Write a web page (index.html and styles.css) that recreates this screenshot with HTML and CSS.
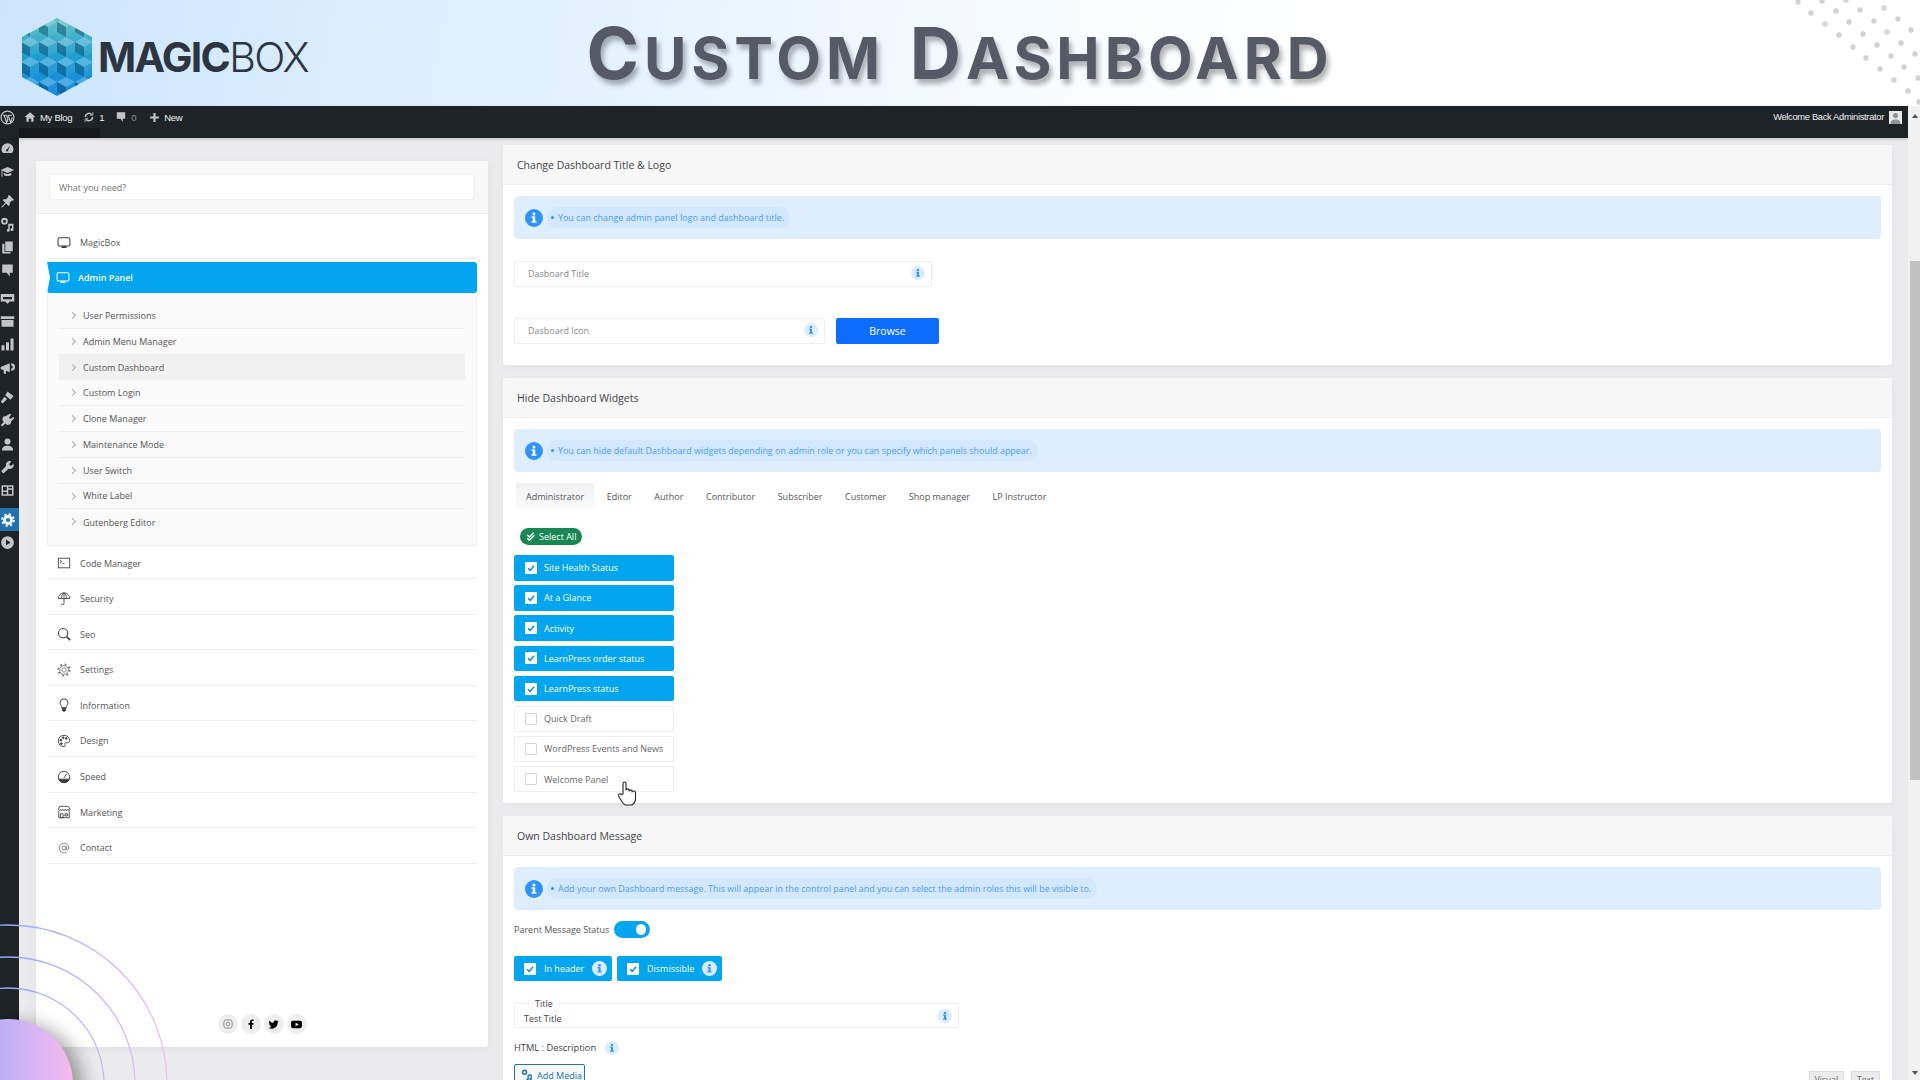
FILE: index.html
```html
<!DOCTYPE html>
<html lang="en">
<head>
    <meta charset="UTF-8">
    <title>Custom Dashboard</title>
    <link rel="stylesheet" href="styles.css">
</head>
<body>

<svg class="defs" width="0" height="0">
    <defs>
        <symbol id="info" viewBox="0 0 20 20"><rect x="8.6" y="8.4" width="2.8" height="6.4"/><rect x="7.2" y="13.6" width="5.6" height="1.6"/><rect x="7.2" y="8.2" width="3" height="1.5"/><circle cx="10" cy="5.6" r="1.7"/></symbol>
        <symbol id="check" viewBox="0 0 12 12"><path d="M3 6.2l2.2 2.2L9 3.8" fill="none" stroke="#0a8fd0" stroke-width="1.5"/></symbol>
        <symbol id="monitor" viewBox="0 0 16 16"><rect x="1.2" y="2" width="13.6" height="9.4" rx="1.6" fill="none" stroke="currentColor" stroke-width="1.2"/><path d="M5.5 11.4h5l.6 2.4H4.9z" fill="currentColor"/></symbol>
    </defs>
</svg>

<header class="banner">
    <div class="logo">
        <svg class="logo-mark" width="74" height="80" viewBox="0 0 74 80">
            <defs>
                <linearGradient id="hexFill" x1="0" y1="0" x2="0" y2="1">
                    <stop offset="0" stop-color="#5fc0c4"/>
                    <stop offset="0.5" stop-color="#1f9dd0"/>
                    <stop offset="1" stop-color="#0f86e0"/>
                </linearGradient>
                <pattern id="cubes" width="18" height="20" patternUnits="userSpaceOnUse" x="1" y="0">
                    <path d="M9 0L18 5 9 10 0 5z" fill="#fff" opacity="0.25"/>
                    <path d="M0 5L9 10V20L0 15z" fill="#00324f" opacity="0.38"/>
                    <path d="M18 5L9 10V20L18 15z" fill="#fff" opacity="0.05"/>
                </pattern>
            </defs>
            <path d="M37 1L72 20V60L37 79 2 60V20z" fill="url(#hexFill)"/>
            <path d="M37 1L72 20V60L37 79 2 60V20z" fill="url(#cubes)"/>
        </svg>
        <span class="logo-text"><b>MAGIC</b>BOX</span>
    </div>
    <h1 class="page-title"><span class="word">Custom</span> <span class="word">Dashboard</span></h1>
    <svg class="dots" width="220" height="106" viewBox="0 0 220 106" fill="#d2d2d2">
        <circle cx="98" cy="2" r="2.7"/><circle cx="122" cy="1" r="2.7"/><circle cx="146" cy="0" r="2.7"/>
        <circle cx="111" cy="13" r="2.7"/><circle cx="136" cy="11" r="2.7"/><circle cx="160" cy="10" r="2.7"/><circle cx="184" cy="8" r="2.7"/>
        <circle cx="125" cy="24" r="2.7"/><circle cx="149" cy="22" r="2.7"/><circle cx="174" cy="21" r="2.7"/><circle cx="198" cy="19" r="2.7"/>
        <circle cx="139" cy="35" r="2.7"/><circle cx="163" cy="34" r="2.7"/><circle cx="187" cy="32" r="2.7"/><circle cx="211" cy="30" r="2.7"/>
        <circle cx="153" cy="47" r="2.7"/><circle cx="177" cy="45" r="2.7"/><circle cx="201" cy="43" r="2.7"/>
        <circle cx="166" cy="58" r="2.7"/><circle cx="191" cy="56" r="2.7"/><circle cx="215" cy="54" r="2.7"/>
        <circle cx="180" cy="69" r="2.7"/><circle cx="204" cy="67" r="2.7"/>
        <circle cx="194" cy="80" r="2.7"/><circle cx="218" cy="78" r="2.7"/>
        <circle cx="208" cy="91" r="2.7"/><circle cx="219" cy="102" r="2.7"/>
    </svg>
</header>

<div class="app">
    <div class="shell">
        <div class="adminbar">
            <div class="bar-group">
                <svg class="bar-wp" width="15" height="15" viewBox="0 0 20 20"><circle cx="10" cy="10" r="8.6" fill="none" stroke="#c3c4c7" stroke-width="1.6"/><path d="M4 7h5M11 7h5M5.5 7l3.4 10 1.6-5-1.6-5M11 7l3.2 10 2.2-7" fill="none" stroke="#c3c4c7" stroke-width="1.5"/></svg>
                <span class="bar-item bar-site">
                    <svg width="12" height="12" viewBox="0 0 20 20" fill="#c3c4c7"><path d="M10 2L1 10h3v8h4v-5h4v5h4v-8h3z"/></svg>
                    My Blog
                </span>
                <span class="bar-item bar-updates">
                    <svg width="12" height="12" viewBox="0 0 20 20" fill="none" stroke="#c3c4c7" stroke-width="2.4"><path d="M4 10a6 6 0 0 1 10.5-4M16 10a6 6 0 0 1-10.5 4"/><path d="M16.5 2v5h-5M3.5 18v-5h5" stroke-width="1.4"/></svg>
                    1
                </span>
                <span class="bar-item bar-comments">
                    <svg width="12" height="12" viewBox="0 0 20 20" fill="#c3c4c7"><path d="M3 2h14v11h-4v5l-4-5H3z"/></svg>
                    <span class="muted">0</span>
                </span>
                <span class="bar-item bar-new">
                    <svg width="11" height="11" viewBox="0 0 20 20" fill="#c3c4c7"><path d="M8 2h4v6h6v4h-6v6H8v-6H2V8h6z"/></svg>
                    New
                </span>
            </div>
            <div class="bar-group">
                <span class="bar-item bar-welcome">Welcome Back Administrator</span>
                <span class="avatar"><svg width="13" height="13" viewBox="0 0 13 13" fill="#8f9396"><circle cx="6.5" cy="4.6" r="2.6"/><path d="M1.5 13c0-3.5 2-4.6 5-4.6s5 1.100 5 4.600z"/></svg></span>
            </div>
            <div class="bar-flyout"></div>
        </div>

        <div class="wpbody">
            <aside class="sidebar">
                <svg viewBox="0 0 20 20"><path d="M10 3a8 8 0 0 0-8 8c0 2 .7 3.800 2 5h12a8 8 0 0 0 2-5 8 8 0 0 0-8-8zm3.500 3l-2.500 6a1.500 1.500 0 1 1-1.500-1z" fill-rule="evenodd"/></svg>
                <svg viewBox="0 0 20 20"><path d="M1 8l9-4 9 4-9 4zM5 11.500v3c2 2 8 2 10 0v-3l-5 2zM2 9h1.200v8H2z"/></svg>
                <svg class="gap" viewBox="0 0 20 20"><path d="M12 1l7 7-2 1-1-.5-3 3v3L11.500 16 8 12.500 3 18H2v-1l5-5.500L3.500 8 5 7h3l3-3-.5-1z"/></svg>
                <svg viewBox="0 0 20 20"><path d="M6 1a4.500 4.500 0 1 1 0 9 4.500 4.500 0 0 1 0-9zm0 2.500a2 2 0 1 0 0 4 2 2 0 0 0 0-4zM11 9h7v7.500a2 2 0 1 1-2-2V11.500h-3v6a2 2 0 1 1-2-2z"/></svg>
                <svg viewBox="0 0 20 20"><path d="M7 2h10v13H7zM3 5h3v11h8v2H3z"/></svg>
                <svg viewBox="0 0 20 20"><path d="M3 2h14v11h-4v5l-4-5H3z"/></svg>
                <svg class="gap-small" viewBox="0 0 20 20"><path d="M2 4h16a1 1 0 0 1 1 1v9h-6l-3 3-3-3H1V5a1 1 0 0 1 1-1zm2 4v3h12V8z" fill-rule="evenodd"/></svg>
                <svg viewBox="0 0 20 20"><path d="M1 3h18v3.500H1zM2 8h16v9H2z"/></svg>
                <svg viewBox="0 0 20 20"><path d="M2 11h4v7H2zM8 7h4v11H8zM14 2h4v16h-4z"/></svg>
                <svg viewBox="0 0 20 20"><path d="M1 8l12-5v12l-5-2v4H5v-5l-4-1zM15 3a5 5 0 0 1 0 10V10a2 2 0 0 0 0-4z"/></svg>
                <svg class="gap" viewBox="0 0 20 20"><path d="M10 2l8 6-4 5-7-6zM6 9l3.500 3-6 6L1 15.500z"/></svg>
                <svg viewBox="0 0 20 20"><path d="M13 1l2 1-3 4 2 2 4-3 1 2-4 4-1 4-4 1-3-2-4 4-2-2 4-4-2-3 1-4 4-1z"/></svg>
                <svg viewBox="0 0 20 20"><circle cx="10" cy="6" r="4"/><path d="M2.500 18c0-5 3.500-6.500 7.500-6.500s7.500 1.500 7.500 6.500z"/></svg>
                <svg viewBox="0 0 20 20"><path d="M18 5l-3.500 3L12 5.500 15 2a5 5 0 0 0-7 6l-6.500 7 3 3 7-6.500a5 5 0 0 0 6.500-6.500z"/></svg>
                <svg viewBox="0 0 20 20"><path d="M2 3h16v14H2zm2 2v5h5V5zm7 0v2h5V5zm0 4v6h5V9zm-7 3v3h5v-3z" fill-rule="evenodd"/></svg>
                <span class="side-active"><svg viewBox="0 0 20 20" fill="none" stroke="#fff"><circle cx="10" cy="10" r="5" stroke-width="4"/><circle cx="10" cy="10" r="8.200" stroke-width="3" stroke-dasharray="3.200 3.240"/></svg></span>
                <svg viewBox="0 0 20 20"><path d="M10 1.500a8.500 8.500 0 1 1 0 17 8.500 8.500 0 0 1 0-17zM8 6v8l6-4z" fill-rule="evenodd"/></svg>
            </aside>

            <main class="content">
                <section class="left-panel">
                    <div class="left-head">
                        <div class="search">What you need?</div>
                    </div>
                    <nav class="menu">
                        <a class="menu-row first"><svg class="menu-icon"><use href="#monitor"/></svg>MagicBox</a>
                        <a class="menu-active"><svg class="menu-icon"><use href="#monitor"/></svg>Admin Panel</a>
                        <div class="submenu">
                            <a class="sub-row">User Permissions</a>
                            <a class="sub-row">Admin Menu Manager</a>
                            <a class="sub-row current">Custom Dashboard</a>
                            <a class="sub-row">Custom Login</a>
                            <a class="sub-row">Clone Manager</a>
                            <a class="sub-row">Maintenance Mode</a>
                            <a class="sub-row">User Switch</a>
                            <a class="sub-row">White Label</a>
                            <a class="sub-row">Gutenberg Editor</a>
                        </div>
                        <a class="menu-row after-sub">
                            <svg class="menu-icon" viewBox="0 0 16 16" fill="none" stroke="currentColor"><rect x="1.500" y="2.500" width="13" height="11"/><path d="M3.500 5l2 1.500-2 1.500M6.500 8.500h2"/></svg>Code Manager</a>
                        <a class="menu-row">
                            <svg class="menu-icon" viewBox="0 0 16 16" fill="none" stroke="currentColor"><path d="M1.500 7.500a6.500 6.500 0 0 1 13 0zM8 1v6.500M5 7.500C5 4 6.500 2 8 1c1.500 1 3 3 3 6.500M8 7.500V13a1.500 1.500 0 0 1-3 0"/></svg>Security</a>
                        <a class="menu-row">
                            <svg class="menu-icon" viewBox="0 0 16 16" fill="none" stroke="currentColor" stroke-width="1.200"><circle cx="7" cy="7" r="5.300"/><path d="M11 11l4 4" stroke-width="1.800"/></svg>Seo</a>
                        <a class="menu-row">
                            <svg class="menu-icon" viewBox="0 0 16 16" fill="none" stroke="#777"><circle cx="8" cy="8" r="2.500"/><circle cx="8" cy="8" r="5"/><circle cx="8" cy="8" r="6.500" stroke-width="2" stroke-dasharray="2 3.100"/></svg>Settings</a>
                        <a class="menu-row">
                            <svg class="menu-icon" viewBox="0 0 16 16" fill="none" stroke="currentColor" stroke-width="1.100"><path d="M5.500 11c0-2-2-3-2-5.500a4.500 4.500 0 0 1 9 0c0 2.500-2 3.500-2 5.500z"/><path d="M6 12h4v2l-1 1H7l-1-1z" fill="currentColor"/></svg>Information</a>
                        <a class="menu-row">
                            <svg class="menu-icon" viewBox="0 0 16 16" fill="none" stroke="currentColor"><path d="M8 1.500a6.500 6.500 0 1 0 0 13c1.500 0 1.500-1.500 1-2.500s0-2 1.500-2h2c1 0 2-1 2-2.500 0-3.500-3-6-6.500-6z"/><circle cx="4.500" cy="7" r="1" fill="currentColor"/><circle cx="7" cy="4.200" r="1" fill="currentColor"/><circle cx="10.500" cy="5" r="1" fill="currentColor"/><circle cx="5" cy="11" r="1" fill="currentColor"/></svg>Design</a>
                        <a class="menu-row">
                            <svg class="menu-icon" viewBox="0 0 16 16" fill="none" stroke="currentColor"><circle cx="8" cy="8" r="6.500"/><path d="M2 10.500h12A6.500 6.500 0 0 1 2 10.500z" fill="currentColor"/><path d="M8 9l3-4.500"/></svg>Speed</a>
                        <a class="menu-row">
                            <svg class="menu-icon" viewBox="0 0 16 16" fill="none" stroke="currentColor"><path d="M3 1.500h10l2 3.500c0 1.500-2.500 1.500-2.500 0 0 1.500-3 1.500-3 0 0 1.500-3 1.500-3 0 0 1.500-2.500 1.500-2.500 0 0 1.500-2.500 1.500-2.500 0z"/><path d="M2 7v7.500h12V7M4 10h3v4.500H4zM9 10h3v2.500H9z"/></svg>Marketing</a>
                        <a class="menu-row">
                            <svg class="menu-icon" viewBox="0 0 16 16" fill="none" stroke="#777"><circle cx="8" cy="8" r="2.400"/><path d="M10.400 5.600v3.400c0 2 3.100 1.500 3.100-1A5.500 5.500 0 1 0 11 12.700"/></svg>Contact</a>
                    </nav>
                    <div class="socials">
                        <span class="social"><svg width="10" height="10" viewBox="0 0 12 12" fill="none" stroke="#777"><rect x="1" y="1" width="10" height="10" rx="3"/><circle cx="6" cy="6" r="2.300"/></svg></span>
                        <span class="social"><svg width="10" height="10" viewBox="0 0 12 12"><path d="M7 12V6.800h1.700L9 4.700H7V3.500c0-.6.2-1 1-1h1.100V.6C8.800.5 8.200.5 7.600.5 6 .5 4.900 1.400 4.900 3.200v1.500H3v2.100h1.900V12z"/></svg></span>
                        <span class="social"><svg width="11" height="11" viewBox="0 0 12 12"><path d="M11.500 2.500c-.4.200-.8.300-1.300.4.500-.3.800-.7 1-1.300-.4.300-.9.500-1.400.6a2.300 2.300 0 0 0-3.900 2C4 4.100 2.400 3.200 1.300 1.900c-.6 1-.3 2.400.7 3-.4 0-.7-.1-1-.3 0 1.100.8 2.100 1.800 2.300-.3.100-.7.100-1 0 .3.900 1.100 1.600 2.100 1.600A4.600 4.600 0 0 1 .5 9.500 6.500 6.500 0 0 0 10.500 3.800c.4-.3.700-.8 1-1.300z"/></svg></span>
                        <span class="social"><svg width="11" height="11" viewBox="0 0 12 12"><path d="M2 2h8a2 2 0 0 1 2 2v4a2 2 0 0 1-2 2H2a2 2 0 0 1-2-2V4a2 2 0 0 1 2-2zm3 2v4l3.500-2z" fill-rule="evenodd"/></svg></span>
                    </div>
                </section>

                <div class="right-col">
                    <section class="panel panel-logo">
                        <h2 class="panel-head">Change Dashboard Title &amp; Logo</h2>
                        <div class="panel-body">
                            <div class="notice">
                                <svg class="notice-icon"><use href="#info"/></svg>
                                <span class="notice-pill"><i></i>You can change admin panel logo and dashboard title.</span>
                            </div>
                            <div class="field field-title">Dasboard Title<svg class="badge"><use href="#info"/></svg></div>
                            <div class="icon-row">
                                <div class="field field-icon">Dasboard Icon<svg class="badge"><use href="#info"/></svg></div>
                                <button class="browse">Browse</button>
                            </div>
                        </div>
                    </section>

                    <section class="panel panel-widgets">
                        <h2 class="panel-head">Hide Dashboard Widgets</h2>
                        <div class="panel-body">
                            <div class="notice">
                                <svg class="notice-icon"><use href="#info"/></svg>
                                <span class="notice-pill"><i></i>You can hide default Dashboard widgets depending on admin role or you can specify which panels should appear.</span>
                            </div>
                            <div class="tabs">
                                <span class="tab active">Administrator</span>
                                <span class="tab">Editor</span>
                                <span class="tab">Author</span>
                                <span class="tab">Contributor</span>
                                <span class="tab">Subscriber</span>
                                <span class="tab">Customer</span>
                                <span class="tab">Shop manager</span>
                                <span class="tab">LP Instructor</span>
                            </div>
                            <span class="select-all">
                                <svg width="10" height="10" viewBox="0 0 12 12" fill="none" stroke="#fff" stroke-width="1.600"><path d="M1.500 3.500L4 6l5-5M1.500 7.500L4 10l6-6"/></svg>
                                Select All
                            </span>
                            <div class="widget-list">
                                <label class="widget on"><span class="box"><svg><use href="#check"/></svg></span>Site Health Status</label>
                                <label class="widget on"><span class="box"><svg><use href="#check"/></svg></span>At a Glance</label>
                                <label class="widget on"><span class="box"><svg><use href="#check"/></svg></span>Activity</label>
                                <label class="widget on"><span class="box"><svg><use href="#check"/></svg></span>LearnPress order status</label>
                                <label class="widget on"><span class="box"><svg><use href="#check"/></svg></span>LearnPress status</label>
                                <label class="widget"><span class="box"></span>Quick Draft</label>
                                <label class="widget"><span class="box"></span>WordPress Events and News</label>
                                <label class="widget"><span class="box"></span>Welcome Panel</label>
                            </div>
                        </div>
                    </section>

                    <section class="panel panel-message">
                        <h2 class="panel-head">Own Dashboard Message</h2>
                        <div class="panel-body">
                            <div class="notice">
                                <svg class="notice-icon"><use href="#info"/></svg>
                                <span class="notice-pill"><i></i>Add your own Dashboard message. This will appear in the control panel and you can select the admin roles this will be visible to.</span>
                            </div>
                            <div class="status-row">Parent Message Status<span class="toggle"></span></div>
                            <div class="option-row">
                                <label class="option opt-header"><span class="box"><svg><use href="#check"/></svg></span>In header<svg class="opt-badge"><use href="#info"/></svg></label>
                                <label class="option opt-dismiss"><span class="box"><svg><use href="#check"/></svg></span>Dismissible<svg class="opt-badge"><use href="#info"/></svg></label>
                            </div>
                            <div class="field field-legend"><span class="legend">Title</span>Test Title<svg class="badge"><use href="#info"/></svg></div>
                            <div class="html-label">HTML : Description<svg class="badge"><use href="#info"/></svg></div>
                            <div class="editor-bar">
                                <button class="add-media"><svg width="12" height="12" viewBox="0 0 20 20" fill="#2271b1"><path d="M6 1a4.500 4.500 0 1 1 0 9 4.500 4.500 0 0 1 0-9zm0 2.500a2 2 0 1 0 0 4 2 2 0 0 0 0-4zM11 9h7v7.500a2 2 0 1 1-2-2V11.500h-3v6a2 2 0 1 1-2-2z" fill-rule="evenodd"/></svg>Add Media</button>
                                <div class="editor-tabs">
                                    <span class="editor-tab">Visual</span>
                                    <span class="editor-tab">Text</span>
                                </div>
                            </div>
                        </div>
                    </section>
                </div>
            </main>
        </div>
    </div>

    <div class="scrollbar">
        <span class="arrow up"></span>
        <span class="thumb"></span>
        <span class="arrow down"></span>
    </div>
</div>

<svg class="rings" width="180" height="165" viewBox="0 0 180 165">
    <defs>
        <linearGradient id="ringLine" gradientUnits="userSpaceOnUse" x1="0" y1="0" x2="170" y2="0">
            <stop offset="0" stop-color="#8ea8ff"/>
            <stop offset="1" stop-color="#f8bdf0"/>
        </linearGradient>
        <linearGradient id="ringFill" x1="0" y1="0" x2="1" y2="0">
            <stop offset="0" stop-color="#90a8ff"/>
            <stop offset="1" stop-color="#f6b9ee"/>
        </linearGradient>
        <filter id="soft" x="-50%" y="-50%" width="200%" height="200%"><feGaussianBlur stdDeviation="9"/></filter>
    </defs>
    <g fill="none" stroke="url(#ringLine)" stroke-width="1.300">
        <circle cx="8" cy="169" r="159"/>
        <circle cx="8" cy="169" r="127"/>
        <circle cx="8" cy="169" r="96"/>
    </g>
    <circle cx="18" cy="174" r="66" fill="#000" opacity="0.35" filter="url(#soft)"/>
    <circle cx="8" cy="169" r="65" fill="url(#ringFill)"/>
</svg>

<svg class="hand" width="20" height="26" viewBox="0 0 20 26" fill="#fff" stroke="#222" stroke-width="1.100" stroke-linejoin="round">
    <path d="M6 14V3.500a1.500 1.500 0 0 1 3 0V10c0-1.500 3-1.500 3 0v1c0-1.500 3-1.500 3 0v1c0-1.500 3.500-1.500 3.500.5V18c0 3-1.500 6-4 7H9c-2 0-3-1.500-4.500-4L1.500 16c-.8-1.500 1.500-3 3-1.500z"/>
</svg>

</body>
</html>
```
FILE: styles.css
```css
* {
    box-sizing: border-box;
}

body {
    margin: 0;
    width: 1920px;
    height: 1080px;
    overflow: hidden;
    position: relative;
    display: flex;
    flex-direction: column;
    font-family: "Open Sans", sans-serif;
    font-size: 9px;
    color: #555;
    background-color: #ebebee;
}

.defs {
    position: absolute;
}

/* banner */
.banner {
    height: 106px;
    flex: none;
    position: relative;
    display: grid;
    grid-template-columns: 1fr auto 1fr;
    align-items: center;
    background: linear-gradient(100deg, #cde5fd 0%, #e4f2ff 30%, #fafdff 58%, #ffffff 70%);
    overflow: hidden;
}

.logo {
    display: flex;
    align-items: center;
    padding: 7px 0 0 20px;
    gap: 4px;
}

.logo-text {
    font-family: "Inter", sans-serif;
    font-size: 41px;
    font-weight: 300;
    letter-spacing: -1.700px;
    color: #2d3540;
}

.logo-text b {
    font-weight: 700;
}

.page-title {
    margin: 0;
    font-family: "Inter", sans-serif;
    font-size: 58px;
    font-weight: 700;
    letter-spacing: 5px;
    line-height: 1;
    text-transform: uppercase;
    word-spacing: 6px;
    color: #565a66;
    text-shadow: 3px 5px 5px rgba(0, 0, 0, 0.3);
}

.word {
    display: inline-block;
}

.word::first-letter {
    font-size: 71px;
}

.dots {
    position: absolute;
    top: 0;
    right: 0;
}

/* wordpress frame */
.app {
    flex: 1;
    min-height: 0;
    display: flex;
}

.shell {
    flex: 1;
    min-width: 0;
    display: flex;
    flex-direction: column;
}

.adminbar {
    height: 32px;
    flex: none;
    position: relative;
    display: flex;
    align-items: flex-start;
    justify-content: space-between;
    padding: 3px 6px 0 0;
    background-color: #1d2327;
    font-family: "Liberation Sans", sans-serif;
    font-size: 9.500px;
    color: #f0f0f1;
    box-shadow: 0 1px 3px rgba(0, 0, 0, 0.2);
}

.bar-group {
    display: flex;
    align-items: center;
    height: 16px;
}

.bar-item {
    display: flex;
    align-items: center;
    gap: 4px;
    letter-spacing: -0.3px;
    white-space: nowrap;
}

.bar-site {
    margin-left: 9px;
}

.bar-updates {
    margin-left: 11px;
}

.bar-comments {
    margin-left: 11px;
}

.bar-new {
    margin-left: 13px;
}

.bar-welcome {
    font-size: 9.300px;
}

.muted {
    color: #8c8f94;
}

.avatar {
    width: 13px;
    height: 13px;
    margin-left: 5px;
    background-color: #e8e8e8;
    overflow: hidden;
}

.bar-flyout {
    position: absolute;
    left: 19px;
    bottom: 0;
    width: 81px;
    height: 10px;
    background-color: #16191c;
}

.wpbody {
    flex: 1;
    min-height: 0;
    display: flex;
}

.sidebar {
    width: 19px;
    flex: none;
    display: flex;
    flex-direction: column;
    align-items: flex-start;
    gap: 8.300px;
    padding: 3px 0 0;
    background-color: #1d2327;
    fill: #c3c4c7;
    overflow: hidden;
}

.sidebar > svg {
    width: 15px;
    height: 15px;
    flex: none;
}

.sidebar .gap {
    margin-top: 6px;
}

.sidebar .gap-small {
    margin-top: 4px;
}

.side-active {
    width: 19px;
    height: 23px;
    flex: none;
    margin: 2px 0 -5px;
    display: flex;
    align-items: center;
    padding-left: 1px;
    background-color: #2271b1;
}

.side-active svg {
    width: 14px;
    height: 14px;
}

.content {
    flex: 1;
    min-width: 0;
    display: flex;
    align-items: flex-start;
    overflow: hidden;
}

/* left menu */
.left-panel {
    width: 452px;
    height: 886px;
    flex: none;
    margin: 23px 15px 0 17px;
    display: flex;
    flex-direction: column;
    background-color: #fff;
    border-radius: 3px;
    box-shadow: 0 2px 10px rgba(0, 0, 0, 0.05);
}

.left-head {
    height: 53px;
    flex: none;
    padding: 13px 13px 0;
    background-color: #f8f8f8;
    border-bottom: 1px solid #eee;
}

.search {
    height: 26px;
    display: flex;
    align-items: center;
    padding-left: 9px;
    background-color: #fff;
    border: 1px solid #efefef;
    border-radius: 2px;
    color: #777;
}

.menu {
    padding: 10px 11px 0;
    color: #555;
}

.menu-row {
    height: 35.600px;
    display: flex;
    align-items: center;
    gap: 9px;
    padding: 4.500px 0 0 9px;
    margin: 0 1px;
    border-bottom: 1px solid #ececec;
}

.menu-row.first {
    height: 35px;
    padding-top: 3px;
}

.menu-row.after-sub {
    height: 33px;
    padding-top: 2px;
}

.menu-icon {
    width: 14px;
    height: 14px;
    flex: none;
    color: #3c3f44;
}

.menu-active {
    height: 31px;
    margin-top: 3px;
    display: flex;
    align-items: center;
    gap: 8px;
    padding-left: 9px;
    background-color: #03a6ee;
    color: #fff;
    font-weight: 600;
    border-radius: 0 3px 3px 3px;
    clip-path: polygon(0 0, 100% 0, 100% 100%, 0 100%, 3px 50%);
}

.menu-active .menu-icon {
    color: #fff;
}

.submenu {
    height: 253px;
    padding: 10px 11px 0;
    background-color: #fafafa;
    border: 1px solid #f0f0f0;
    border-top: 0;
}

.sub-row {
    height: 25.800px;
    display: flex;
    align-items: center;
    padding-left: 24px;
    position: relative;
    border-bottom: 1px solid #eee;
}

.sub-row:last-child {
    border-bottom: 0;
}

.sub-row::before {
    content: "";
    position: absolute;
    left: 11px;
    top: 10px;
    width: 4px;
    height: 4px;
    border-top: 1px solid #aaa;
    border-right: 1px solid #aaa;
    transform: rotate(45deg);
}

.sub-row.current {
    background-color: #f1f1f1;
    border-bottom: 0;
}

.socials {
    margin-top: auto;
    padding-bottom: 13px;
    display: flex;
    justify-content: center;
    gap: 3px;
}

.social {
    width: 20px;
    height: 20px;
    display: flex;
    align-items: center;
    justify-content: center;
    background-color: #eee;
    border-radius: 50%;
}

/* right column */
.right-col {
    width: 1389px;
    flex: none;
    margin-top: 7px;
    display: flex;
    flex-direction: column;
    gap: 13px;
}

.panel {
    flex: none;
    background-color: #fff;
    border-radius: 2px;
    box-shadow: 0 2px 8px rgba(0, 0, 0, 0.04);
}

.panel-logo {
    height: 220px;
}

.panel-widgets {
    height: 425px;
}

.panel-message {
    height: 300px;
}

.panel-head {
    height: 40px;
    margin: 0;
    display: flex;
    align-items: center;
    padding-left: 14px;
    background-color: #f7f7f7;
    border-bottom: 1px solid #ececec;
    font-size: 10.500px;
    font-weight: 400;
    color: #3f4348;
}

.panel-body {
    padding: 11px 11px 0;
}

.notice {
    height: 43px;
    display: flex;
    align-items: center;
    gap: 4px;
    padding-left: 11px;
    background-color: #dfeefe;
    border-radius: 4px;
}

.notice-icon {
    width: 18px;
    height: 18px;
    border-radius: 50%;
    background-color: #2f93fb;
    fill: #fff;
}

.notice-pill {
    height: 21px;
    display: flex;
    align-items: center;
    gap: 4px;
    padding: 0 6px 0 4px;
    background-color: #d3e7fd;
    border-radius: 11px;
    font-size: 8.950px;
    color: #4c9df5;
}

.notice-pill i {
    width: 3px;
    height: 3px;
    background-color: #2f93fb;
    border-radius: 50%;
}

.field {
    height: 26px;
    position: relative;
    display: flex;
    align-items: center;
    justify-content: space-between;
    padding: 0 6px 2px 13px;
    border: 1px solid #eee;
    border-radius: 2px;
    color: #888;
}

.badge {
    width: 14px;
    height: 14px;
    flex: none;
    border-radius: 50%;
    background-color: #dcecff;
    fill: #2f93fb;
}

.field-title {
    width: 418px;
    margin-top: 22px;
}

.icon-row {
    margin-top: 31px;
    display: flex;
    gap: 11px;
}

.field-icon {
    width: 311px;
}

.browse {
    width: 103px;
    height: 26px;
    padding: 0;
    border: 0;
    border-radius: 2px;
    background-color: #0d6efd;
    color: #fff;
    font-family: "Open Sans", sans-serif;
    font-size: 10.500px;
}

/* tabs and widgets */
.tabs {
    height: 26px;
    margin-top: 11px;
    display: flex;
    align-items: center;
    gap: 22.600px;
    padding-left: 12px;
    position: relative;
    color: #555;
}

.tab.active {
    position: relative;
    z-index: 0;
}

.tab.active::before {
    content: "";
    position: absolute;
    z-index: -1;
    left: -10px;
    right: -10px;
    top: -7px;
    height: 26px;
    background: linear-gradient(#f0f1f3, #fbfbfb);
    border-radius: 2px 2px 0 0;
}

.select-all {
    height: 17px;
    width: 62px;
    margin: 19px 0 0 6px;
    display: flex;
    align-items: center;
    gap: 3px;
    padding-left: 6px;
    background-color: #198754;
    border-radius: 9px;
    color: #fff;
}

.widget-list {
    width: 160px;
    margin-top: 10px;
    display: flex;
    flex-direction: column;
    gap: 4.600px;
}

.widget {
    height: 25.600px;
    display: flex;
    align-items: center;
    gap: 7px;
    padding-left: 10px;
    border: 1px solid #eee;
    border-radius: 2px;
    color: #666;
    white-space: nowrap;
}

.widget.on {
    background-color: #03a6ee;
    border-color: #03a6ee;
    color: #fff;
}

.box {
    width: 12px;
    height: 12px;
    flex: none;
    background-color: #fff;
    border: 1px solid #d5d5d5;
    border-radius: 1px;
}

.on .box,
.option .box {
    border: 0;
}

.box svg {
    display: block;
    width: 12px;
    height: 12px;
}

/* message panel */
.status-row {
    height: 17px;
    margin-top: 11px;
    display: flex;
    align-items: center;
    gap: 5px;
    color: #555;
}

.toggle {
    width: 36px;
    height: 17px;
    position: relative;
    background-color: #03a6ee;
    border-radius: 9px;
}

.toggle::after {
    content: "";
    position: absolute;
    right: 4px;
    top: 3px;
    width: 10px;
    height: 11px;
    background-color: #fff;
    border-radius: 50%;
}

.option-row {
    margin-top: 18px;
    display: flex;
    gap: 5px;
}

.option {
    height: 25px;
    display: flex;
    align-items: center;
    gap: 8px;
    padding: 0 9px 0 10px;
    background-color: #03a6ee;
    border-radius: 2px;
    color: #fff;
    white-space: nowrap;
}

.opt-header {
    width: 98px;
}

.opt-dismiss {
    width: 105px;
}

.opt-badge {
    width: 15px;
    height: 15px;
    flex: none;
    margin-left: auto;
    border-radius: 50%;
    background-color: #d9ecff;
    fill: #2f93fb;
}

.field-legend {
    width: 445px;
    height: 25px;
    margin-top: 22px;
    padding: 5px 6px 0 9px;
    color: #444;
}

.field-legend .badge {
    margin-top: -5px;
}

.legend {
    position: absolute;
    left: 15px;
    top: -7px;
    padding: 0 5px;
    background-color: #fff;
    color: #444;
}

.html-label {
    margin-top: 12px;
    height: 15px;
    display: flex;
    align-items: center;
    gap: 9px;
    font-size: 9.300px;
    color: #444;
}

.editor-bar {
    margin-top: 9px;
    display: flex;
    justify-content: space-between;
    align-items: flex-start;
}

.add-media {
    width: 71px;
    height: 22px;
    display: flex;
    align-items: center;
    gap: 4px;
    padding: 0 0 0 6px;
    background-color: #f6f7f7;
    border: 1px solid #2271b1;
    border-radius: 2px;
    font-family: "Open Sans", sans-serif;
    font-size: 9px;
    white-space: nowrap;
    color: #2271b1;
}

.editor-tabs {
    display: flex;
    gap: 7px;
    margin: 7px 1px 0 0;
}

.editor-tab {
    padding: 2px 5px;
    height: 20px;
    background-color: #ebebeb;
    border: 1px solid #dcdcde;
    color: #646970;
    font-size: 8.500px;
}

/* scrollbar */
.scrollbar {
    width: 12px;
    flex: none;
    position: relative;
    background-color: #f1f1f1;
}

.thumb {
    position: absolute;
    left: 2px;
    right: 0;
    top: 155px;
    height: 519px;
    background-color: #c1c1c1;
}

.arrow {
    position: absolute;
    left: 4px;
    width: 0;
    height: 0;
    border-left: 3.500px solid transparent;
    border-right: 3.500px solid transparent;
}

.arrow.up {
    top: 8px;
    border-bottom: 4px solid #505050;
}

.arrow.down {
    bottom: 5px;
    border-top: 4px solid #505050;
}

/* things lying on top of the page */
.rings {
    position: absolute;
    left: 0;
    bottom: 0;
    pointer-events: none;
}

.hand {
    position: absolute;
    left: 617px;
    top: 780px;
}
```
